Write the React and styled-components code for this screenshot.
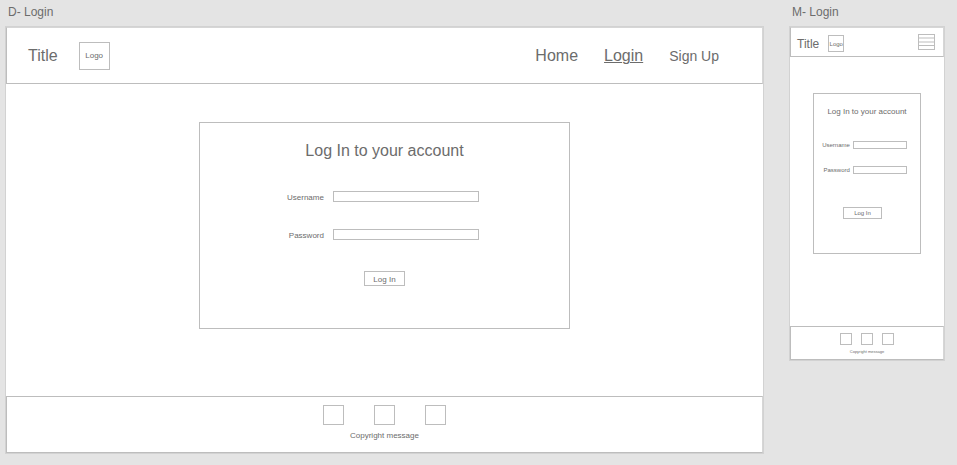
import React, { useId } from "react";
import styled, { createGlobalStyle, css } from "styled-components";

const line = "#bdbdbd";
const ink = "#6c6c6c";

const GlobalStyle = createGlobalStyle`
  * { box-sizing: border-box; }
  body {
    margin: 0;
    background: #e4e4e4;
    color: ${ink};
    font-family: "Liberation Sans", Arial, Helvetica, sans-serif;
  }
`;

const Canvas = styled.div`
  display: grid;
  grid-template-columns: 759fr 156fr;
  column-gap: 25px;
  align-items: start;
  padding: 4px 12px 11px 5px;
`;

const Artboard = styled.section`
  min-width: 0;
`;

const ArtboardName = styled.h2`
  margin: 0 0 6px;
  padding-left: 3px;
  font-size: 12px;
  font-weight: 400;
  line-height: 16px;
`;

const Frame = styled.div`
  display: flex;
  flex-direction: column;
  border: 1px solid #d2d2d2;
  background: #fff;
`;

const Header = styled.header`
  display: flex;
  align-items: center;
  border: 1px solid ${line};
  border-top-color: #d6d6d6;
  border-right-color: #d6d6d6;
  padding: ${(p) => (p.$small ? "6px 8px 3px 6px" : "14px 43px 13px 21px")};
`;

const Brand = styled.div`
  display: flex;
  align-items: center;
  gap: ${(p) => (p.$small ? 9 : 21)}px;
  margin-right: auto;
`;

const SiteTitle = styled.span`
  font-size: ${(p) => (p.$small ? 12 : 16)}px;
  line-height: ${(p) => (p.$small ? 16 : 20)}px;
`;

const Logo = styled.span`
  display: flex;
  align-items: center;
  justify-content: center;
  border: 1px solid ${line};
  width: ${(p) => (p.$small ? 16 : 31)}px;
  height: ${(p) => (p.$small ? 17 : 28)}px;
  font-size: ${(p) => (p.$small ? 6 : 8)}px;
  line-height: 10px;
`;

const Nav = styled.nav`
  display: flex;
  align-items: center;
  gap: 26px;
`;

const NavLink = styled.a`
  color: inherit;
  font-size: ${(p) => (p.$minor ? 14 : 16)}px;
  line-height: 20px;
  text-decoration: ${(p) => (p["aria-current"] ? "underline" : "none")};
  text-decoration-thickness: 1px;
`;

const MenuButton = styled.button`
  display: block;
  border: 0;
  padding: 0 0 3px;
  background: none;
  color: ${line};
  svg { display: block; }
`;

const Main = styled.main`
  display: flex;
  justify-content: center;
  padding: ${(p) => (p.$small ? "36px 0 72px" : "38px 0 67px")};
`;

const Card = styled.form`
  display: flex;
  flex-direction: column;
  align-items: center;
  border: 1px solid ${line};
  width: ${(p) => (p.$small ? 70 : 49)}%;
  padding: ${(p) => (p.$small ? "13px 0 34px" : "18px 0 42px")};
`;

const CardTitle = styled.h1`
  margin: 0;
  font-size: ${(p) => (p.$small ? 8 : 16)}px;
  font-weight: 400;
  line-height: ${(p) => (p.$small ? 10 : 20)}px;
  white-space: nowrap;
`;

const Fields = styled.div`
  display: grid;
  grid-template-columns: auto auto;
  align-items: center;
  justify-items: end;
  ${(p) =>
    p.$small
      ? css`
          gap: 17px 3px;
          padding: 24px 5px 0 0;
        `
      : css`
          gap: 27px 9px;
          padding: 30px 3px 0 0;
        `}
`;

const Label = styled.label`
  padding-top: ${(p) => (p.$small ? 0 : 2)}px;
  font-size: ${(p) => (p.$small ? 6 : 8)}px;
  line-height: ${(p) => (p.$small ? 8 : 9)}px;
`;

const Input = styled.input`
  border: 1px solid ${line};
  border-radius: 0;
  padding: 0 2px;
  outline: none;
  background: #fff;
  color: inherit;
  font: inherit;
  width: ${(p) => (p.$small ? 54 : 146)}px;
  height: ${(p) => (p.$small ? 8 : 11)}px;
  font-size: ${(p) => (p.$small ? 6 : 8)}px;
`;

const Submit = styled.button`
  border: 1px solid ${line};
  border-radius: 0;
  background: #fff;
  color: inherit;
  font-family: inherit;
  ${(p) =>
    p.$small
      ? css`
          margin: 33px 9px 0 0;
          padding: 1px 10px;
          font-size: 6px;
          line-height: 8px;
        `
      : css`
          margin: 31px 0 0;
          padding: 3px 8px 0;
          font-size: 8px;
          line-height: 10px;
        `}
`;

const Footer = styled.footer`
  display: flex;
  flex-direction: column;
  align-items: center;
  border: 1px solid ${line};
  border-right-color: #d6d6d6;
  padding: ${(p) => (p.$small ? "6px 0 4px" : "8px 0 11px")};
`;

const SocialRow = styled.div`
  display: flex;
  gap: ${(p) => (p.$small ? 9 : 30)}px;
`;

const SocialLink = styled.a`
  border: 1px solid ${line};
  width: ${(p) => (p.$small ? 12 : 21)}px;
  height: ${(p) => (p.$small ? 12 : 20)}px;
`;

const Copyright = styled.small`
  margin-top: ${(p) => (p.$small ? 4 : 6)}px;
  font-size: ${(p) => (p.$small ? 4 : 8)}px;
  line-height: ${(p) => (p.$small ? 6 : 10)}px;
`;

function MenuIcon() {
  return (
    <svg width="17" height="16" viewBox="0 0 17 16" fill="none" stroke="currentColor" aria-hidden="true">
      <rect x="0.5" y="0.5" width="16" height="15" />
      <path d="M1 4H16M1 8H16M1 11.5H16" />
    </svg>
  );
}

function LoginForm({ small }) {
  const id = useId();
  return (
    <Card $small={small} onSubmit={(e) => e.preventDefault()}>
      <CardTitle $small={small}>Log In to your account</CardTitle>
      <Fields $small={small}>
        <Label $small={small} htmlFor={`${id}-user`}>Username</Label>
        <Input $small={small} id={`${id}-user`} type="text" />
        <Label $small={small} htmlFor={`${id}-pass`}>Password</Label>
        <Input $small={small} id={`${id}-pass`} type="password" />
      </Fields>
      <Submit $small={small} type="submit">Log In</Submit>
    </Card>
  );
}

function LoginScreen({ name, small = false }) {
  return (
    <Artboard>
      <ArtboardName>{name}</ArtboardName>
      <Frame>
        <Header $small={small}>
          <Brand $small={small}>
            <SiteTitle $small={small}>Title</SiteTitle>
            <Logo $small={small}>Logo</Logo>
          </Brand>
          {small ? (
            <MenuButton type="button" aria-label="Menu">
              <MenuIcon />
            </MenuButton>
          ) : (
            <Nav>
              <NavLink href="#home">Home</NavLink>
              <NavLink href="#login" aria-current="page">Login</NavLink>
              <NavLink href="#signup" $minor>Sign Up</NavLink>
            </Nav>
          )}
        </Header>
        <Main $small={small}>
          <LoginForm small={small} />
        </Main>
        <Footer $small={small}>
          <SocialRow $small={small}>
            {["First", "Second", "Third"].map((n) => (
              <SocialLink key={n} $small={small} href="#social" aria-label={`${n} social link`} />
            ))}
          </SocialRow>
          <Copyright $small={small}>Copyright message</Copyright>
        </Footer>
      </Frame>
    </Artboard>
  );
}

export default function App() {
  return (
    <>
      <GlobalStyle />
      <Canvas>
        <LoginScreen name="D- Login" />
        <LoginScreen name="M- Login" small />
      </Canvas>
    </>
  );
}
